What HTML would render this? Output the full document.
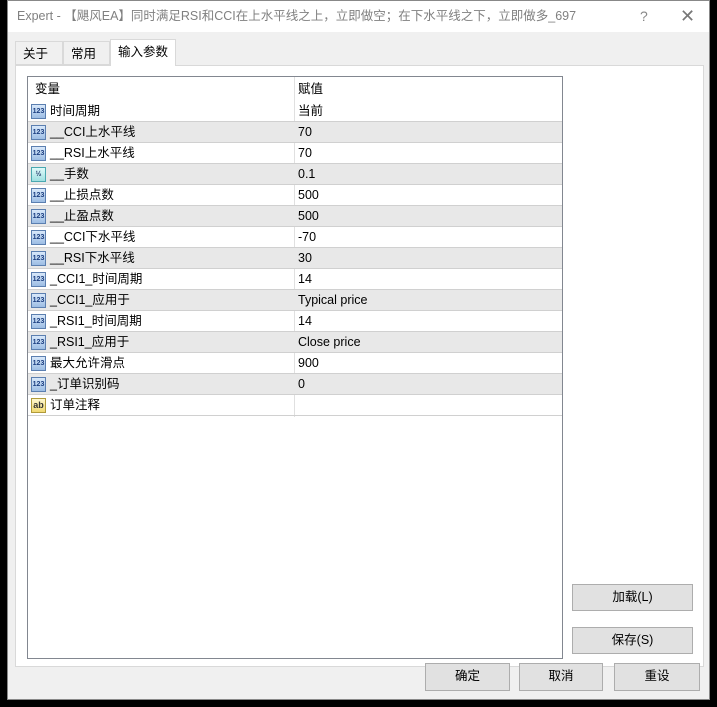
<!DOCTYPE html>
<html><head><meta charset="utf-8"><style>
*{margin:0;padding:0;box-sizing:border-box}
body{width:717px;height:707px;overflow:hidden;background:#000;position:relative;font-family:"Liberation Sans","Noto Sans CJK SC",sans-serif;font-size:12.5px;color:#000}
.dlg{position:absolute;left:7px;top:0;width:703px;height:700px;background:#f0f0f0;border:1px solid #888}
.title{position:absolute;left:0;top:0;width:701px;height:31px;background:#fff;color:#808080;font-size:12.5px;line-height:31px;padding-left:9px;white-space:nowrap}
.q{position:absolute;left:632px;top:0;color:#888;font-size:14px}
.x{position:absolute;left:672px;top:0;color:#777;font-size:18px}
.tab{position:absolute;top:40px;height:24px;line-height:24px;padding:0 7px;border:1px solid #d9d9d9;background:#f0f0f0;white-space:nowrap}
.panel{position:absolute;left:7px;top:64px;width:689px;height:602px;background:#fff;border:1px solid #d9d9d9}
.tbl{position:absolute;left:19px;top:75px;width:536px;height:583px;border:1px solid #828790;background:#fff}
.row{position:absolute;left:0;width:534px;height:21px;border-bottom:1px solid #d0d0d0}
.row.g{background:#e8e8e8}
.row span{position:absolute;top:0;line-height:20px;white-space:nowrap}
.n{left:22px}.v{left:270px}
.ic{position:absolute;left:3px;top:3px;width:15px;height:15px;border:1px solid #5b7fb0;background:linear-gradient(#d8e8fa,#9dbde4);font-size:7px;line-height:13px;color:#1b3e80;text-align:center;font-weight:bold}
.ic.h{border-color:#4aa8b0;background:linear-gradient(#e0fafa,#9fdfe0);color:#236}
.ic.a{border-color:#b09a3a;background:linear-gradient(#fff8d0,#f0d870);color:#333;font-size:9px}
.vl{position:absolute;left:266px;top:0;width:1px;height:340px;background:#e0e0e0}
.btn{position:absolute;width:121px;height:27px;background:#e1e1e1;border:1px solid #adadad;text-align:center;line-height:25px}
</style></head><body>
<div class="dlg">
<div class="title">Expert - 【飓风EA】同时满足RSI和CCI在上水平线之上，立即做空；在下水平线之下，立即做多_697<span class="q">?</span><span class="x">✕</span></div>
<div class="tab" style="left:7px;width:48px">关于</div>
<div class="tab" style="left:55px;width:47px">常用</div>
<div class="tab" style="left:102px;top:38px;height:27px;width:66px;background:#fff;border-bottom:none;z-index:2">输入参数</div>
<div class="panel"></div>
<div class="tbl">
<div class="vl"></div>
<div class="row" style="top:0;height:24px;border-bottom:none"><span style="left:7px;top:2px">变量</span><span class="v" style="top:2px">赋值</span></div>
<div class="row" style="top:24px"><div class="ic">123</div><span class="n">时间周期</span><span class="v">当前</span></div>
<div class="row g" style="top:45px"><div class="ic">123</div><span class="n">__CCI上水平线</span><span class="v">70</span></div>
<div class="row" style="top:66px"><div class="ic">123</div><span class="n">__RSI上水平线</span><span class="v">70</span></div>
<div class="row g" style="top:87px"><div class="ic h">½</div><span class="n">__手数</span><span class="v">0.1</span></div>
<div class="row" style="top:108px"><div class="ic">123</div><span class="n">__止损点数</span><span class="v">500</span></div>
<div class="row g" style="top:129px"><div class="ic">123</div><span class="n">__止盈点数</span><span class="v">500</span></div>
<div class="row" style="top:150px"><div class="ic">123</div><span class="n">__CCI下水平线</span><span class="v">-70</span></div>
<div class="row g" style="top:171px"><div class="ic">123</div><span class="n">__RSI下水平线</span><span class="v">30</span></div>
<div class="row" style="top:192px"><div class="ic">123</div><span class="n">_CCI1_时间周期</span><span class="v">14</span></div>
<div class="row g" style="top:213px"><div class="ic">123</div><span class="n">_CCI1_应用于</span><span class="v">Typical price</span></div>
<div class="row" style="top:234px"><div class="ic">123</div><span class="n">_RSI1_时间周期</span><span class="v">14</span></div>
<div class="row g" style="top:255px"><div class="ic">123</div><span class="n">_RSI1_应用于</span><span class="v">Close price</span></div>
<div class="row" style="top:276px"><div class="ic">123</div><span class="n">最大允许滑点</span><span class="v">900</span></div>
<div class="row g" style="top:297px"><div class="ic">123</div><span class="n">_订单识别码</span><span class="v">0</span></div>
<div class="row" style="top:318px"><div class="ic a">ab</div><span class="n">订单注释</span><span class="v"></span></div>
</div>
<div class="btn" style="left:564px;top:583px">加载(L)</div>
<div class="btn" style="left:564px;top:626px">保存(S)</div>
<div class="btn" style="left:417px;top:662px;width:85px;height:28px">确定</div>
<div class="btn" style="left:511px;top:662px;width:84px;height:28px">取消</div>
<div class="btn" style="left:606px;top:662px;width:86px;height:28px">重设</div>
</div>
</body></html>
